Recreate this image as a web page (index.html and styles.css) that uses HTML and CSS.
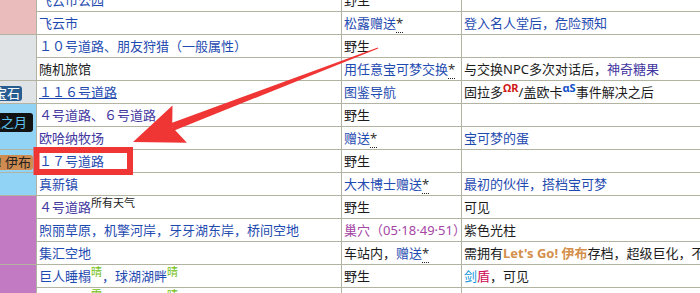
FILE: index.html
```html
<!DOCTYPE html>
<html lang="zh-CN">
<head>
<meta charset="utf-8">
<title>获得方式</title>
<link rel="stylesheet" href="styles.css">
</head>
<body>
<div class="viewport">
  <table class="loc">
    <colgroup>
      <col class="c-game"><col class="c-place"><col class="c-method"><col class="c-note">
    </colgroup>
    <tbody>
      <tr>
        <td class="game g-pink" rowspan="2"></td>
        <td><a class="lk" href="#">飞云市公园</a></td>
        <td>野生</td>
        <td></td>
      </tr>
      <tr>
        <td><a class="lk" href="#">飞云市</a></td>
        <td><a class="lk" href="#">松露赠送</a><abbr class="note">*</abbr></td>
        <td class="lk-text">登入名人堂后，危险预知</td>
      </tr>
      <tr>
        <td class="game g-gray" rowspan="2"></td>
        <td class="lk-text">１０号道路、朋友狩猎（一般属性）</td>
        <td>野生</td>
        <td></td>
      </tr>
      <tr>
        <td>随机旅馆</td>
        <td><a class="lk" href="#">用任意宝可梦交换</a><abbr class="note">*</abbr></td>
        <td>与交换NPC多次对话后，<a class="lk lk-v" href="#">神奇糖果</a></td>
      </tr>
      <tr>
        <td class="game g-gray"><span class="badge b-sapphire">阿尔法蓝宝石</span></td>
        <td><a class="lk lk-u" href="#">１１６号道路</a></td>
        <td><a class="lk" href="#">图鉴导航</a></td>
        <td>固拉多<sup class="s-omega">ΩR</sup>/盖欧卡<sup class="s-alpha">αS</sup>事件解决之后</td>
      </tr>
      <tr>
        <td class="game g-blue g-top" rowspan="2"><span class="badge b-moon">究极之月</span></td>
        <td class="lk-text lk-v">４号道路、６号道路</td>
        <td>野生</td>
        <td></td>
      </tr>
      <tr>
        <td><a class="lk lk-v" href="#">欧哈纳牧场</a></td>
        <td><a class="lk" href="#">赠送</a><abbr class="note">*</abbr></td>
        <td><a class="lk" href="#">宝可梦的蛋</a></td>
      </tr>
      <tr>
        <td class="game g-blue"><span class="badge b-eevee">Let's Go! 伊布</span></td>
        <td><a class="lk" href="#">１７号道路</a></td>
        <td>野生</td>
        <td></td>
      </tr>
      <tr>
        <td class="game g-blue"></td>
        <td><a class="lk" href="#">真新镇</a></td>
        <td><a class="lk" href="#">大木博士赠送</a><abbr class="note">*</abbr></td>
        <td class="lk-text">最初的伙伴，搭档宝可梦</td>
      </tr>
      <tr>
        <td class="game g-purple" rowspan="3"></td>
        <td><a class="lk lk-v" href="#">４号道路</a><sup class="s-weather">所有天气</sup></td>
        <td>野生</td>
        <td>可见</td>
      </tr>
      <tr>
        <td class="lk-text">煦丽草原，机擎河岸，牙牙湖东岸，桥间空地</td>
        <td class="den">巢穴（05·18·49·51）</td>
        <td>紫色光柱</td>
      </tr>
      <tr>
        <td><a class="lk" href="#">集汇空地</a></td>
        <td>车站内，<a class="lk" href="#">赠送</a><abbr class="note">*</abbr></td>
        <td>需拥有<b class="letsgo">Let's Go! 伊布</b>存档，超级巨化，不可捕获</td>
      </tr>
      <tr>
        <td class="game g-purple" rowspan="2"></td>
        <td class="lk-text"><a class="lk" href="#">巨人睡榻</a><sup class="s-sun">晴</sup>，<a class="lk" href="#">球湖湖畔</a><sup class="s-sun">晴</sup></td>
        <td>野生</td>
        <td><span class="sword">剑</span><span class="shield">盾</span>，可见</td>
      </tr>
      <tr>
        <td class="lk-text"><a class="lk" href="#">沙尘窟地</a><sup class="s-sun">雪</sup>，<a class="lk" href="#">巨人镜池</a><sup class="s-sun">晴</sup></td>
        <td>野生</td>
        <td><span class="sword">剑</span><span class="shield">盾</span>，可见</td>
      </tr>
    </tbody>
  </table>

  <svg class="markup" width="700" height="293" viewBox="0 0 700 293" aria-hidden="true">
    <rect x="36.5" y="150" width="93.5" height="22" fill="none" stroke="#f03535" stroke-width="6"/>
    <polygon points="377.8,47.5 378.2,48.5 173.6,130.7 170.8,123.3" fill="#f03535"/>
    <polygon points="133,142 186.9,142.8 172.2,127 172.5,105.4" fill="#f03535"/>
  </svg>
</div>
</body>
</html>
```

FILE: styles.css
```css
html, body {
  margin: 0;
  padding: 0;
  background: #fff;
}

.viewport {
  position: relative;
  width: 700px;
  height: 293px;
  overflow: hidden;
}

.loc {
  border-collapse: collapse;
  table-layout: fixed;
  width: 945px;
  margin: -12px 0 0 -84px;
  font-family: "Noto Sans", "Noto Sans CJK SC", sans-serif;
  font-size: 13px;
  line-height: 22px;
  color: #1c1c1c;
  background: #fff;
}

.c-game { width: 120px; }
.c-place { width: 305px; }
.c-method { width: 120px; }
.c-note { width: 400px; }

.loc td {
  border: 1px solid #b3b3a2;
  padding: 0 2px;
  white-space: nowrap;
  overflow: hidden;
  vertical-align: middle;
}

.lk, .lk-text {
  color: #1f4bb0;
  text-decoration: none;
}

.lk-text .lk { color: inherit; }

.lk-v, .lk-text.lk-v { color: #43379f; }

.lk-u { text-decoration: underline; }

.note {
  color: #333;
  text-decoration: none;
  border-bottom: 1px dotted #222;
}

sup {
  line-height: 0;
  vertical-align: super;
}

.s-omega, .s-alpha {
  font-size: 11px;
  font-weight: bold;
}
.s-omega { color: #d01818; }
.s-alpha { color: #1050c8; }

.s-weather {
  font-size: 11px;
  color: #1c1c1c;
}

.s-sun {
  font-size: 11px;
  color: #72c010;
}

.den { color: #a546a5; }

.letsgo {
  color: #d48f4a;
  font-weight: bold;
}

.sword { color: #1096dc; }
.shield { color: #cf0a55; }

/* game column */
.game {
  text-align: right;
}
.loc td.game { padding-right: 3px; }
.loc td.g-top { vertical-align: top; padding-top: 6px; }

.g-pink { background: #ebbcbc; }
.g-gray { background: #dfe3e6; }
.g-blue { background: #90d3f5; }
.g-purple { background: #c27ac2; }

.badge {
  display: inline-block;
  vertical-align: middle;
  line-height: 15px;
  padding: 0 2px;
  border-radius: 3px;
  font-size: 13px;
}

.b-sapphire {
  background: #285d91;
  color: #fff;
  margin-right: 11px;
}

.b-moon {
  background: #121212;
  color: #5cc4ef;
  line-height: 19px;
  padding: 0 6px 0 3px;
}

.b-eevee {
  background: #d08c50;
  color: #222;
}

.markup {
  position: absolute;
  left: 0;
  top: 0;
  pointer-events: none;
}
```
